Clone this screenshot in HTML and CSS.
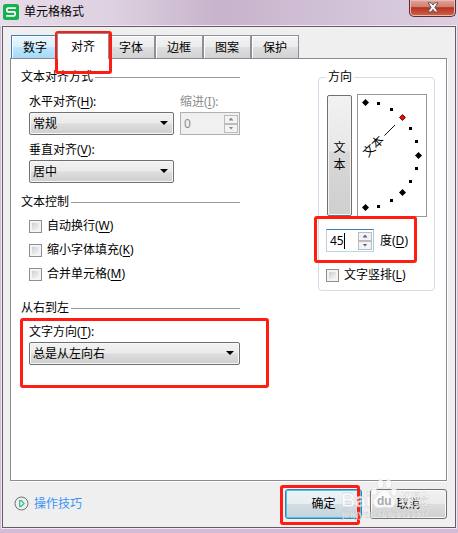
FILE: index.html
```
<!DOCTYPE html>
<html lang="zh-CN">
<head>
<meta charset="utf-8">
<title>单元格格式</title>
<link rel="stylesheet" href="styles.css">
</head>
<body>
<div class="window">
  <header class="titlebar">
    <svg class="logo" width="16" height="16" viewBox="0 0 16 16"><rect width="16" height="16" rx="2.5" fill="#16b04c"/><path d="M12.8 4.2H5Q3.8 4.2 3.8 6T5 7.9H11Q12.2 7.9 12.2 9.8T11 11.8H3.2" fill="none" stroke="#fff" stroke-width="1.8"/></svg>
    <h1>单元格格式</h1>
    <button class="close" aria-label="关闭"><svg width="12" height="11" viewBox="0 0 12 11"><path d="M1 .8H4.3L6 3 7.7.8H11L7.9 5.3 11.2 10H7.8L6 7.5 4.2 10H.8L4.1 5.3Z" fill="#f6f6f8" stroke="#62505a" stroke-width="1"/></svg></button>
  </header>
  <main class="client">
    <nav class="tabs">
      <span class="tab hot">数字</span><span class="tab active">对齐</span><span class="tab">字体</span><span class="tab">边框</span><span class="tab">图案</span><span class="tab">保护</span>
    </nav>
    <section class="panel">
      <div class="left">
        <h2 class="heading">文本对齐方式</h2>
        <div class="fields">
          <div class="field wide">
            <label>水平对齐(<u>H</u>):</label>
            <div class="select">常规<i></i></div>
          </div>
          <div class="field disabled">
            <label>缩进(<u>I</u>):</label>
            <div class="spin"><span>0</span><b><i class="up"></i><i class="down"></i></b></div>
          </div>
        </div>
        <div class="fields second">
          <div class="field wide">
            <label>垂直对齐(<u>V</u>):</label>
            <div class="select">居中<i></i></div>
          </div>
        </div>
        <h2 class="heading control">文本控制</h2>
        <div class="check"><i></i>自动换行(<u>W</u>)</div>
        <div class="check"><i></i>缩小字体填充(<u>K</u>)</div>
        <div class="check"><i></i>合并单元格(<u>M</u>)</div>
        <h2 class="heading direction">从右到左</h2>
        <div class="fields">
          <div class="field full">
            <label>文字方向(<u>T</u>):</label>
            <div class="select">总是从左向右<i></i></div>
          </div>
        </div>
      </div>
      <fieldset class="group">
        <legend>方向</legend>
        <div class="orient">
          <button class="vertical">文<br>本</button>
          <svg class="dial" width="70" height="123" viewBox="357 94 70 123">
            <rect x="357.5" y="94.5" width="69" height="122" fill="#fff" stroke="#999"/>
            <path d="M384.5 135.5L395 125" stroke="#111"/>
            <text x="373.5" y="150.5" transform="rotate(-45 373.5 146.5)" text-anchor="middle">文本</text>
            <g fill="#000">
              <path d="M365.5 99l3.5 3.5-3.5 3.5-3.5-3.5zM418.5 152l3.5 3.5-3.5 3.5-3.5-3.5zM402.5 189l3.5 3.5-3.5 3.5-3.5-3.5zM365.5 204l3.5 3.5-3.5 3.5-3.5-3.5z"/>
              <path d="M377 102h3v3h-3zM390 108h3v3h-3zM409 127h3v3h-3zM415 140h3v3h-3zM415 167h3v3h-3zM409 180h3v3h-3zM390 199h3v3h-3zM377 205h3v3h-3z"/>
            </g>
            <path d="M402.5 114.5l3 3-3 3-3-3z" fill="#f00" stroke="#300" stroke-width=".8"/>
          </svg>
        </div>
        <div class="degree"><div class="spin focus"><span class="caret">45</span><b><i class="up"></i><i class="down"></i></b></div>度(<u>D</u>)</div>
        <div class="check"><i></i>文字竖排(<u>L</u>)</div>
      </fieldset>
    </section>
    <footer class="footer">
      <a class="tips"><svg width="15" height="15" viewBox="0 0 15 15" fill="none"><circle cx="7.5" cy="7.5" r="6.5" stroke="#6c7271"/><path d="M5.7 4.7v5.6h1.6l2.7-2.8-2.7-2.8z" stroke="#2bbd83" stroke-width="1.2"/></svg>操作技巧</a>
      <button class="btn ok">确定</button>
      <button class="btn">取消</button>
    </footer>
  </main>
  <div class="mark mark-tab"></div>
  <div class="mark mark-degree"></div>
  <div class="mark mark-direction"></div>
  <div class="mark mark-ok"></div>
  <svg class="watermark" width="100" height="50" viewBox="338 475 100 50">
    <g fill="#fff" stroke="#bbb" stroke-width=".3" opacity=".8">
      <ellipse cx="374" cy="491" rx="3" ry="4"/><ellipse cx="380.5" cy="484" rx="3" ry="4.2"/><ellipse cx="388.5" cy="484" rx="3" ry="4.2"/><ellipse cx="394" cy="492" rx="3" ry="4"/>
      <path d="M384 490c-4 0-5 5-8 7-5 4-3 11 3 11 3 0 7-1 10 0 6 0 8-6 4-10-4-3-4-8-9-8z"/>
      <text class="brand" x="341" y="507" textLength="30">Bai</text>
      <text class="cn" x="399" y="505" textLength="30">经验</text>
      <text class="url" x="342" y="518" textLength="86">jingyan.baidu.com</text>
    </g>
    <text class="du" x="377" y="505">du</text>
  </svg>
</div>
</body>
</html>
```
FILE: styles.css
```
* { box-sizing: border-box; }
body { margin: 0; overflow: hidden; }
body, button { font: 12px/24px "Noto Sans", "Noto Sans CJK SC", sans-serif; color: #000; }
h1, h2 { margin: 0; font-size: 12px; font-weight: 400; }
i { font-style: normal; }
u { text-underline-offset: 2px; text-decoration-thickness: 1px; text-decoration-skip-ink: none; }

.window {
  position: relative; width: 458px; height: 533px; display: flex; flex-direction: column;
  background: linear-gradient(90deg, #e7dcea 0, #ddd0e0 25%, #c7b3cb 48%, #d0c0d6 70%, #dccfe0 100%) top / 100% 26px no-repeat, #d3bdd6;
}
.titlebar { height: 26px; flex: none; display: flex; align-items: center; padding: 0 2px 2px 3px; }
.titlebar h1 { flex: 1; padding-left: 5px; }
.close {
  align-self: flex-start; width: 47px; height: 17px; padding: 0; display: flex; justify-content: center; align-items: center;
  border: 1px solid #572e35; border-top: 0; border-radius: 0 0 5px 5px;
  background: linear-gradient(#dda69d 0, #cf7f73 42%, #bb3021 48%, #cf6546 100%); box-shadow: inset 0 0 0 1px #edb9ae;
}
.close svg { margin-top: -2px; }
.client {
  height: 502px; flex: none; margin: 0 2px; padding: 5px 8px 0 7px; background: #efefef;
  border: 1px solid #655b67; box-shadow: 0 0 0 1px #f1e8f2; display: flex; flex-direction: column;
}

.tabs { display: flex; align-items: flex-end; height: 26px; padding-left: 1px; }
.tab {
  width: 48px; height: 23px; line-height: 23px; text-align: center; border: 1px solid #8c8f9b; border-bottom: 0;
  background: linear-gradient(#f3f3f3 0, #ececec 48%, #dedede 52%, #d2d2d2 100%); box-shadow: inset 1px 1px #fff;
}
.tab.hot { border-color: #3c7fb1; background: linear-gradient(#eaf6fd 0, #d9f0fc 48%, #bee6fd 52%, #a7d9f5 100%); }
.tab.active { width: 52px; height: 26px; margin: 0 -2px -1px; background: #fff; position: relative; z-index: 1; line-height: 26px; }

.panel {
  height: 423px; flex: none; background: #fff; border: 1px solid #898c95; box-shadow: 1px 1px #fff;
  padding: 6px 11px 0 10px; display: flex; justify-content: space-between; align-items: flex-start;
}
.left { width: 219px; }
.heading { display: flex; align-items: center; gap: 2px; height: 24px; }
.heading::after { content: ""; flex: 1; height: 1px; background: #999; }
.heading + .fields { margin-top: 1px; }
.heading.control { margin-top: 7px; }
.heading.direction { margin-top: 10px; }
.fields { display: flex; gap: 6px; padding-left: 8px; }
.fields.second { margin-top: 3px; }
.field { width: 60px; }
.field.wide { width: 145px; }
.field.full { width: 211px; }
.field label { display: block; height: 22px; line-height: 23px; }
.field.full label { height: 21px; line-height: 22px; }
.select {
  height: 23px; padding: 0 5px 0 3px; line-height: 21px; border: 1px solid #707070; border-radius: 2px;
  display: flex; justify-content: space-between; align-items: center;
  background: linear-gradient(#f2f2f2 0, #ebebeb 49%, #dddddd 51%, #cfcfcf 100%); box-shadow: inset 0 0 0 1px #f7f7f7;
}
.select i { width: 8px; height: 4px; margin-top: -1px; background: #000; clip-path: polygon(0 0, 100% 0, 50% 100%); }
.disabled { color: #8d8d8d; }
.spin {
  height: 23px; border: 1px solid #b0b0b0; background: #f0f0f0; padding: 0 1px 0 3px;
  display: flex; justify-content: space-between; align-items: center; line-height: 21px;
}
.spin span { font-size: 12px; }
.spin b { display: flex; flex-direction: column; width: 14px; }
.spin i { height: 9px; border: 1px solid #bcbcbc; background: #f3f3f3; display: flex; align-items: center; justify-content: center; }
.spin i::after { content: ""; width: 5px; height: 3px; background: #888; clip-path: polygon(50% 0, 100% 100%, 0 100%); }
.spin i.down::after { clip-path: polygon(0 0, 100% 0, 50% 100%); }
.spin.focus { width: 48px; background: #fff; border-color: #3d7bad #a4c9e3 #b7d9ed #b5cfe7; }
.spin.focus i::after { background: #4c61a0; }
.caret { border-right: 1px solid #000; line-height: 16px; }
.check { display: flex; align-items: center; height: 24px; padding-left: 8px; }
.check i {
  width: 13px; height: 13px; margin-right: 5px; border: 1px solid #8e8f8f;
  background: linear-gradient(135deg, #cbcfd5, #f6f6f6) content-box, #f4f4f4; padding: 2px;
}

.group {
  width: 117px; height: 223px; margin: 3px 0 0; padding: 5px 7px 0; min-width: 0;
  border: 1px solid #d0dde7; border-radius: 4px;
}
.group legend { padding: 0 2px; height: 18px; line-height: 18px; }
.orient { display: flex; gap: 5px; height: 123px; margin: 3px 0 0 1px; }
.vertical {
  width: 25px; height: 121px; margin-top: 1px; padding: 0; line-height: 17px; border: 1px solid #707070; border-radius: 2px;
  background: linear-gradient(#f2f2f2 0, #e7e7e7 46%, #d8d8d8 47%, #cfcfcf 100%); box-shadow: inset 0 0 0 1px #f3f3f3;
}
.degree { display: flex; align-items: center; margin-top: 12px; height: 23px; }
.degree .spin { margin-right: 6px; }
.group .check { padding: 0; margin-top: 11px; }

.footer { display: flex; align-items: center; height: 45px; padding: 0 0 0 4px; }
.tips { display: flex; align-items: center; gap: 5px; flex: 1; color: #3b94f5; }
.btn {
  width: 77px; height: 30px; padding: 0; border: 1px solid #707070; border-radius: 3px;
  background: linear-gradient(#f2f2f2 0, #ebebeb 49%, #dddddd 51%, #cfcfcf 100%); box-shadow: inset 0 0 0 1px #fafafa;
}
.btn.ok { margin-right: 8px; border-color: #3c7fb1; box-shadow: inset 0 0 0 1px #45c8ee; background: linear-gradient(#eef3f5 0, #e5eef2 49%, #d3dde3 51%, #c5d3dc 100%); }

.mark { position: absolute; border: 3px solid #ff1c11; border-radius: 3px; }
.mark-tab { left: 55px; top: 31px; width: 57px; height: 43px; }
.mark-degree { left: 314px; top: 216px; width: 103px; height: 47px; }
.mark-direction { left: 20px; top: 318px; width: 249px; height: 70px; }
.mark-ok { left: 280px; top: 485px; width: 80px; height: 40px; }
.watermark { position: absolute; left: 338px; top: 475px; }
.brand { font: bold 20px "Liberation Sans", sans-serif; }
.cn { font: bold 15px "Noto Sans CJK SC", sans-serif; }
.url { font: 11px "Liberation Sans", sans-serif; }
.du { font: bold 12px "Liberation Sans", sans-serif; fill: #aaa; }
```
